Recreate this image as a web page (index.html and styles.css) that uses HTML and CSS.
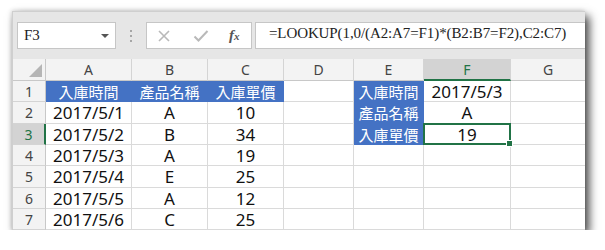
FILE: index.html
```html
<!DOCTYPE html>
<html lang="zh-Hant">
  <head>
    <meta charset="UTF-8" />
    <title>LOOKUP</title>
    <link rel="stylesheet" href="styles.css">
  </head>
  <body>
    <div class="excel">
      <div class="formula_bar">
        <div class="name_box">
          <span>F3</span>
          <i class="arrow"></i>
        </div>
        <div class="dots"><i></i><i></i><i></i></div>
        <div class="btn_box">
          <svg width="14" height="14" viewBox="0 0 14 14"><path d="M2 2L12 12M12 2L2 12" stroke="#b9b9b9" stroke-width="1.6" fill="none"/></svg>
          <svg width="16" height="14" viewBox="0 0 16 14"><path d="M1.5 7.5L5.5 11.5L14.5 2" stroke="#b9b9b9" stroke-width="2" fill="none"/></svg>
          <span class="fx">f<small>x</small></span>
        </div>
        <div class="formula">=LOOKUP(1,0/(A2:A7=F1)*(B2:B7=F2),C2:C7)</div>
      </div>

      <div class="sheet">
        <div class="corner"></div>
        <div class="col_head">A</div>
        <div class="col_head">B</div>
        <div class="col_head">C</div>
        <div class="col_head">D</div>
        <div class="col_head">E</div>
        <div class="col_head active">F</div>
        <div class="col_head">G</div>

        <div class="row_head">1</div>
        <div class="cell blue">入庫時間</div>
        <div class="cell blue">產品名稱</div>
        <div class="cell blue">入庫單價</div>
        <div class="cell"></div>
        <div class="cell blue">入庫時間</div>
        <div class="cell">2017/5/3</div>
        <div class="cell"></div>

        <div class="row_head">2</div>
        <div class="cell">2017/5/1</div>
        <div class="cell">A</div>
        <div class="cell">10</div>
        <div class="cell"></div>
        <div class="cell blue">產品名稱</div>
        <div class="cell">A</div>
        <div class="cell"></div>

        <div class="row_head active">3</div>
        <div class="cell">2017/5/2</div>
        <div class="cell">B</div>
        <div class="cell">34</div>
        <div class="cell"></div>
        <div class="cell blue">入庫單價</div>
        <div class="cell selected">19</div>
        <div class="cell"></div>

        <div class="row_head">4</div>
        <div class="cell">2017/5/3</div>
        <div class="cell">A</div>
        <div class="cell">19</div>
        <div class="cell"></div>
        <div class="cell"></div>
        <div class="cell"></div>
        <div class="cell"></div>

        <div class="row_head">5</div>
        <div class="cell">2017/5/4</div>
        <div class="cell">E</div>
        <div class="cell">25</div>
        <div class="cell"></div>
        <div class="cell"></div>
        <div class="cell"></div>
        <div class="cell"></div>

        <div class="row_head">6</div>
        <div class="cell">2017/5/5</div>
        <div class="cell">A</div>
        <div class="cell">12</div>
        <div class="cell"></div>
        <div class="cell"></div>
        <div class="cell"></div>
        <div class="cell"></div>

        <div class="row_head">7</div>
        <div class="cell">2017/5/6</div>
        <div class="cell">C</div>
        <div class="cell">25</div>
        <div class="cell"></div>
        <div class="cell"></div>
        <div class="cell"></div>
        <div class="cell"></div>
      </div>
    </div>
  </body>
</html>
```

FILE: styles.css
```css
* {
  box-sizing: border-box;
  margin: 0;
  padding: 0;
}
body {
  background: #fff;
  font-family: "Noto Sans", "Noto Sans CJK TC", sans-serif;
}
.excel {
  margin: 11px 0 0 12px;
  width: 573px;
  height: 219px;
  overflow: hidden;
  background: #e6e6e6;
  border: 1px solid #cfcfcf;
  border-right: none;
  border-bottom: none;
  box-shadow: 4px 5px 9px rgba(0, 0, 0, 0.75), -1px -1px 4px rgba(0, 0, 0, 0.12);
}

/* formula bar */
.formula_bar {
  height: 47px;
  display: flex;
  align-items: flex-start;
  padding: 10px 0 0 4px;
}
.name_box {
  width: 99px;
  height: 27px;
  background: #fff;
  border: 1px solid #c6c6c6;
  display: flex;
  align-items: center;
  justify-content: space-between;
  padding: 0 6px 0 6px;
  font-family: "Liberation Serif", serif;
  font-size: 15px;
  color: #222;
}
.name_box .arrow {
  width: 0;
  height: 0;
  border-left: 4px solid transparent;
  border-right: 4px solid transparent;
  border-top: 4px solid #555;
  margin-top: 1px;
}
.dots {
  width: 30px;
  height: 27px;
  display: flex;
  flex-direction: column;
  align-items: center;
  justify-content: center;
  gap: 3px;
}
.dots i {
  width: 2px;
  height: 2px;
  background: #a6a6a6;
}
.btn_box {
  width: 106px;
  height: 27px;
  background: #fff;
  border: 1px solid #c6c6c6;
  display: flex;
  align-items: center;
  padding: 0 0 0 10px;
  gap: 22px;
}
.fx {
  font-family: "Liberation Serif", serif;
  font-style: italic;
  font-weight: bold;
  font-size: 15px;
  color: #555;
  margin-left: -2px;
}
.fx small {
  font-size: 11px;
}
.formula {
  flex: 1;
  height: 27px;
  margin-left: 3px;
  background: #fff;
  border: 1px solid #c6c6c6;
  border-right: none;
  padding: 2px 0 0 13px;
  font-family: "Liberation Serif", serif;
  font-size: 15px;
  letter-spacing: -0.1px;
  color: #222;
  white-space: nowrap;
}

/* sheet */
.sheet {
  display: grid;
  grid-template-columns: 33px 86px 76px 76px 70px 70px 87px 75px;
  grid-template-rows: 22px 21px 22px 21px 21px 22px 21px 21px;
  background: #fff;
}
.corner {
  background: #f3f3f3;
  border-right: 1px solid #c8c8c8;
  border-bottom: 1px solid #c8c8c8;
  position: relative;
}
.corner::after {
  content: "";
  position: absolute;
  right: 3px;
  bottom: 3px;
  border-left: 13px solid transparent;
  border-bottom: 13px solid #b5b5b5;
}
.col_head,
.row_head {
  background: #f3f3f3;
  color: #444;
  font-size: 14px;
  display: flex;
  align-items: center;
  justify-content: center;
  border-right: 1px solid #d4d4d4;
  border-bottom: 1px solid #d4d4d4;
}
.col_head {
  border-bottom-color: #c8c8c8;
}
.row_head {
  border-right-color: #c8c8c8;
}
.col_head.active {
  background: #d3d3d3;
  color: #217346;
  border-bottom: 2px solid #217346;
}
.row_head.active {
  background: #d3d3d3;
  color: #217346;
  border-right: 2px solid #217346;
}
.cell {
  border-right: 1px solid #dadada;
  border-bottom: 1px solid #dadada;
  display: flex;
  align-items: center;
  justify-content: center;
  font-size: 17px;
  color: #111;
  white-space: nowrap;
  position: relative;
}
.cell.blue {
  background: #4472c4;
  border-color: #4472c4;
  color: #fff;
  font-size: 15px;
}
.cell.selected::after {
  content: "";
  position: absolute;
  left: -1px;
  top: -1px;
  right: -1px;
  bottom: -1px;
  border: 2px solid #217346;
}
.cell.selected::before {
  content: "";
  position: absolute;
  right: -3px;
  bottom: -3px;
  width: 5px;
  height: 5px;
  background: #217346;
  border: 1px solid #fff;
  z-index: 1;
}
```
